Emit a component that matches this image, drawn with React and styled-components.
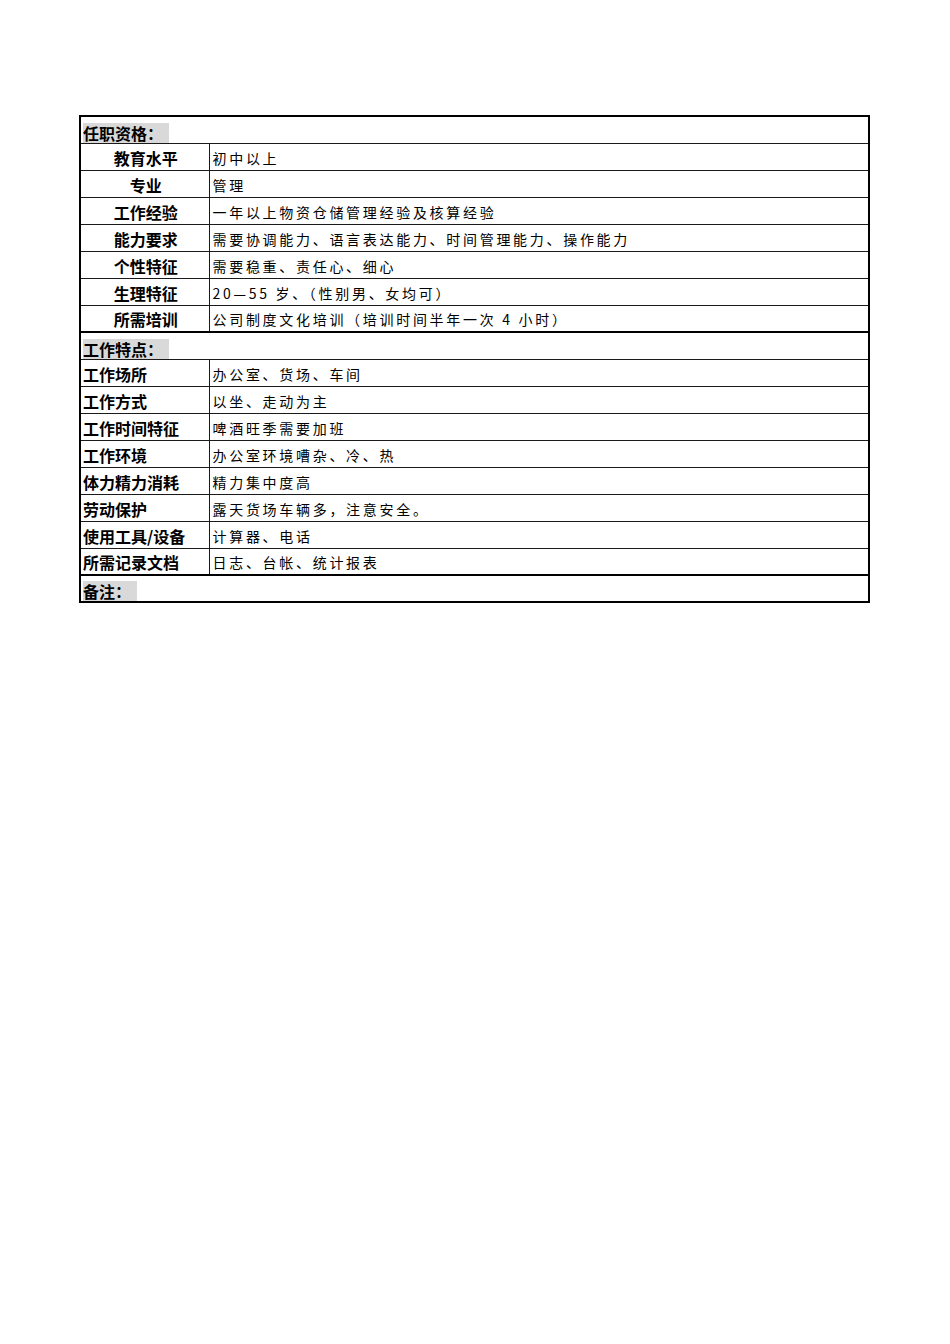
import React from 'react';
import styled, { createGlobalStyle } from 'styled-components';

const GlobalStyle = createGlobalStyle`
  html, body {
    margin: 0;
    padding: 0;
    background: #ffffff;
  }
  body {
    font-family: "Noto Sans CJK SC", "Noto Sans", sans-serif;
    color: #000;
  }
`;

const Page = styled.div`
  width: 950px;
  min-height: 1344px;
  padding: 115px 0 0 79px;
  box-sizing: border-box;
`;

const Sheet = styled.table`
  width: 791px;
  border-collapse: collapse;
  table-layout: fixed;
  border: 2px solid #000;
  font-size: 16px;
  line-height: 20px;
`;

const Row = styled.tr`
  height: 27px;
  border-bottom: ${({ $thick }) => ($thick ? '2px solid #000' : '1px solid #1a1a1a')};
`;

const SectionCell = styled.td`
  padding: 0 0 0 2px;
  vertical-align: bottom;
  line-height: 0;
`;

const Highlight = styled.span`
  display: inline-block;
  background: #d9d9d9;
  font-weight: 700;
  font-size: 16px;
  line-height: 20px;
  padding-right: 6px;
  vertical-align: bottom;
`;

const Label = styled.td`
  padding: 2px 0 0 2px;
  border-right: 1px solid #1a1a1a;
  font-weight: 700;
  font-size: 16px;
  line-height: 20px;
  vertical-align: middle;
  text-align: ${({ $center }) => ($center ? 'center' : 'left')};
  white-space: nowrap;
`;

const Value = styled.td`
  padding: 2px 0 0 3px;
  font-size: 14px;
  line-height: 20px;
  letter-spacing: 2.7px;
  vertical-align: middle;
  white-space: nowrap;
`;

const qualifications = [
  ['教育水平', '初中以上'],
  ['专业', '管理'],
  ['工作经验', '一年以上物资仓储管理经验及核算经验'],
  ['能力要求', '需要协调能力、语言表达能力、时间管理能力、操作能力'],
  ['个性特征', '需要稳重、责任心、细心'],
  ['生理特征', '20—55 岁、（性别男、女均可）'],
  ['所需培训', '公司制度文化培训（培训时间半年一次 4 小时）'],
];

const features = [
  ['工作场所', '办公室、货场、车间'],
  ['工作方式', '以坐、走动为主'],
  ['工作时间特征', '啤酒旺季需要加班'],
  ['工作环境', '办公室环境嘈杂、冷、热'],
  ['体力精力消耗', '精力集中度高'],
  ['劳动保护', '露天货场车辆多，注意安全。'],
  ['使用工具/设备', '计算器、电话'],
  ['所需记录文档', '日志、台帐、统计报表'],
];

const App = () => {
  return (
    <>
      <GlobalStyle />
      <Page>
        <Sheet>
          <colgroup>
            <col style={{ width: '129px' }} />
            <col />
          </colgroup>
          <tbody>
            <Row>
              <SectionCell colSpan={2}>
                <Highlight>任职资格：</Highlight>
              </SectionCell>
            </Row>
            {qualifications.map(([label, value], i) => (
              <Row key={label} $thick={i === qualifications.length - 1}>
                <Label $center>{label}</Label>
                <Value>{value}</Value>
              </Row>
            ))}
            <Row>
              <SectionCell colSpan={2}>
                <Highlight>工作特点：</Highlight>
              </SectionCell>
            </Row>
            {features.map(([label, value], i) => (
              <Row key={label} $thick={i === features.length - 1}>
                <Label>{label}</Label>
                <Value>{value}</Value>
              </Row>
            ))}
            <Row>
              <SectionCell colSpan={2}>
                <Highlight>备注：</Highlight>
              </SectionCell>
            </Row>
          </tbody>
        </Sheet>
      </Page>
    </>
  );
};

export default App;
